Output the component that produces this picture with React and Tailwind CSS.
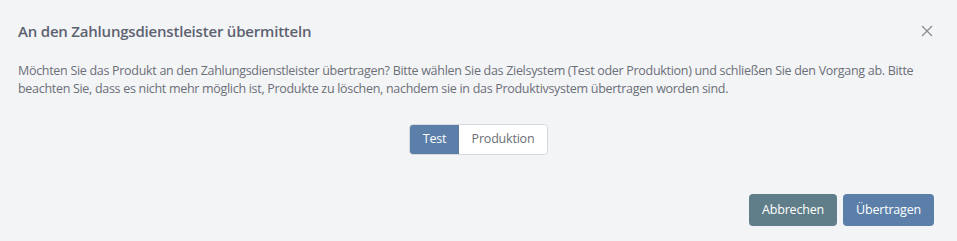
export default function App() {
  return (
    <div
      className="w-[957px] h-[241px] bg-[#f3f4f6] text-[#6b6f78] flex flex-col"
      style={{ fontFamily: '"Open Sans", "Noto Sans", sans-serif' }}
    >
      {/* Header */}
      <div className="flex items-center justify-between pl-[18px] pr-[24px] pt-[19px] h-[43px]">
        <h2 className="text-[15px] font-semibold text-[#5d6270] tracking-[-0.2px]">
          An den Zahlungsdienstleister übermitteln
        </h2>
        <button className="text-[#8a8d93]">
          <svg width="12" height="12" viewBox="0 0 12 12" fill="none" stroke="currentColor" strokeWidth="1.3">
            <path d="M1 1l10 10M11 1L1 11" />
          </svg>
        </button>
      </div>

      {/* Body */}
      <div className="px-[18px] pt-[19px]">
        <p className="text-[12.5px] leading-[18px] tracking-[-0.3px] text-[#6b6f78]">
          Möchten Sie das Produkt an den Zahlungsdienstleister übertragen? Bitte wählen Sie das Zielsystem (Test oder Produktion) und schließen Sie den Vorgang ab. Bitte beachten Sie, dass es nicht mehr möglich ist, Produkte zu löschen, nachdem sie in das Produktivsystem übertragen worden sind.
        </p>
        <div className="flex justify-center mt-[26px]">
          <div className="flex h-[31px] rounded-[4px] border border-[#d6d8dc] overflow-hidden text-[12.5px] tracking-[-0.2px]">
            <button className="w-[49px] bg-[#5b7fa9] text-white">Test</button>
            <button className="w-[88px] bg-white text-[#6b6f78]">Produktion</button>
          </div>
        </div>
      </div>

      {/* Footer */}
      <div className="flex justify-end gap-[6px] pr-[23px] mt-auto mb-[15px] text-[12.5px] tracking-[-0.2px]">
        <button className="h-[32px] w-[88px] rounded-[4px] bg-[#5f7e89] text-white">
          Abbrechen
        </button>
        <button className="h-[32px] w-[91px] rounded-[4px] bg-[#5b7fa9] text-white">
          Übertragen
        </button>
      </div>
    </div>
  );
}
